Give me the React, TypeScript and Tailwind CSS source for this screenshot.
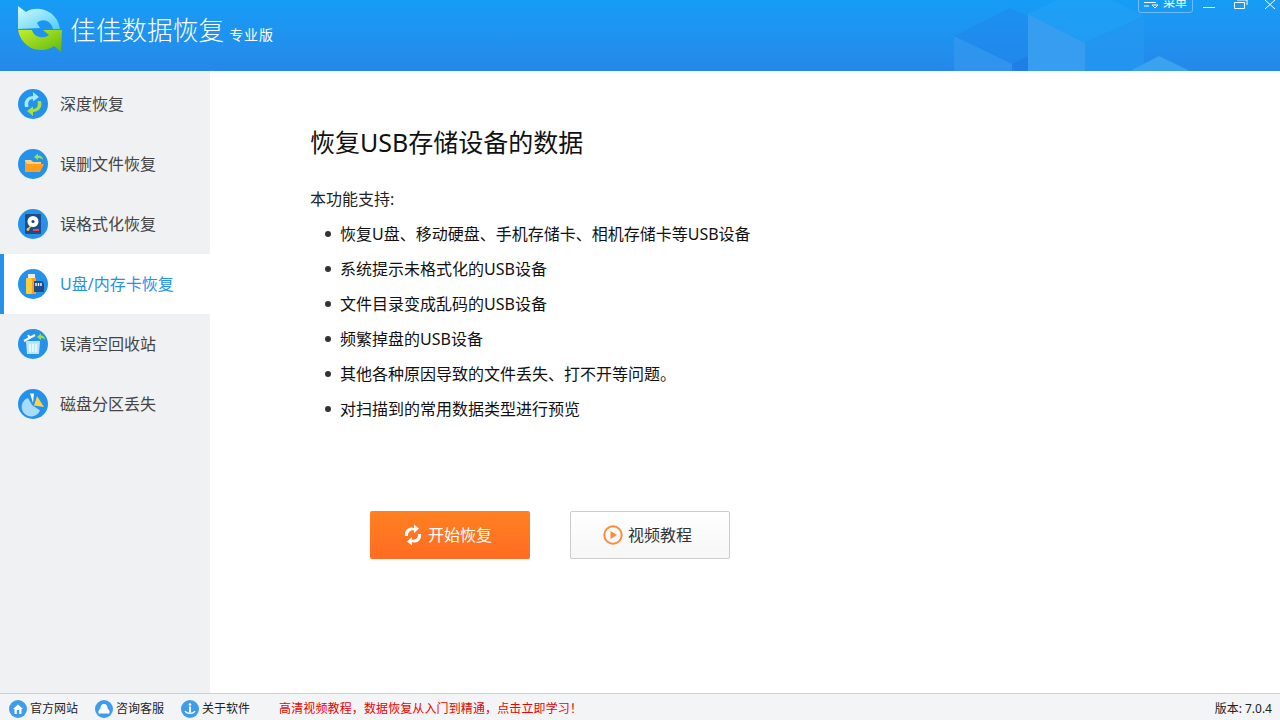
import React from 'react';

const FONT = "font-['Noto_Sans','Noto_Sans_CJK_SC',sans-serif]";

function Logo() {
  return (
    <svg width="48" height="50" viewBox="0 0 48 50" className="shrink-0">
      <defs>
        <linearGradient id="lgTop" x1="0" y1="0" x2="1" y2="1">
          <stop offset="0" stopColor="#d6fbff" />
          <stop offset="1" stopColor="#4fcdf5" />
        </linearGradient>
        <linearGradient id="lgBot" x1="0" y1="0" x2="1" y2="1">
          <stop offset="0" stopColor="#c3ee2c" />
          <stop offset="1" stopColor="#5fb80e" />
        </linearGradient>
      </defs>
      <path d="M2 1 L10 7 C20 0 41 4 44 24 L37 24 C35 15 26 13 21 18 L24 23 L2 24 Z" fill="url(#lgTop)" />
      <path d="M2 25 L16 25 C18 33 28 34 33 30 L27 25 L46 25 L45 47 L38 41 C28 49 6 46 2 25 Z" fill="url(#lgBot)" />
    </svg>
  );
}

function Circle({ children }: { children: React.ReactNode }) {
  return (
    <svg width="30" height="30" viewBox="0 0 30 30" className="shrink-0">
      <circle cx="15" cy="15" r="15" fill="#2492ea" />
      {children}
    </svg>
  );
}

function DeepIcon() {
  return (
    <Circle>
      <path d="M7 18 C5 11 10 7 15 7 L15 3 L21 8 L15 12.5 L15 10 C11 10 9.5 13 10.5 18 Z" fill="#a5e9ff" />
      <path d="M23 12 C25 19 20 23 15 23 L15 27 L9 22 L15 17.5 L15 20 C19 20 20.5 17 19.5 12 Z" fill="#a6e23a" />
    </Circle>
  );
}

function FileIcon() {
  return (
    <Circle>
      <path d="M16 8 L20 4.5 L20 6.5 C23 6.5 25 8 25 11 C24 9.5 22 9 20 9 L20 11 Z" fill="#9fe04a" />
      <path d="M7 11 L13 11 L15 13 L23 13 L23 15 L7 15 Z" fill="#ffd27a" />
      <path d="M9 15 L26 15 L22 23 L7 23 L7 12 Z" fill="#ff9d1e" />
    </Circle>
  );
}

function FormatIcon() {
  return (
    <Circle>
      <rect x="7" y="5" width="16" height="20" rx="1" fill="#1f4b87" />
      <circle cx="15" cy="12.5" r="5.5" fill="#fff" />
      <circle cx="15" cy="12.5" r="1.6" fill="#1f4b87" />
      <path d="M10 20 L13 17" stroke="#f5c842" strokeWidth="1.6" />
      <circle cx="10" cy="20.5" r="1.4" fill="#f5c842" />
      <rect x="15" y="20" width="6" height="2" fill="#ee4b4b" />
    </Circle>
  );
}

function UsbIcon() {
  return (
    <Circle>
      <rect x="10" y="5" width="7" height="4" fill="#e9edf2" />
      <rect x="8" y="9" width="6" height="16" rx="1" fill="#ffce3c" />
      <rect x="14" y="9" width="4" height="16" fill="#ff9d1e" />
      <path d="M16 12 L24 12 L26 14 L26 23 L16 23 Z" fill="#1f4b87" />
      <path d="M18 14 V17 M20.5 14 V17 M23 14 V17" stroke="#fff" strokeWidth="1.4" />
    </Circle>
  );
}

function TrashIcon() {
  return (
    <Circle>
      <path d="M6 12 L17 6" stroke="#fff" strokeWidth="2" />
      <path d="M10 6 L12 9" stroke="#fff" strokeWidth="2" />
      <path d="M8 12 H22 L21 25 H9 Z" fill="#b9e6fb" />
      <path d="M12 15 V23 M15 15 V23 M18 15 V23" stroke="#fff" strokeWidth="1.3" />
      <path d="M19 8 L23 4.5 L23 6.5 C25 6.5 27 8 27 11 C26 9.5 25 9 23 9 L23 11 Z" fill="#9fe04a" />
    </Circle>
  );
}

function PieIcon() {
  return (
    <Circle>
      <path d="M10 9 A9.5 9.5 0 1 0 22 21.5 L14 16 Z" fill="#a9dcfb" />
      <path d="M12 4.5 L16 4.5 L15 14 Z" fill="#fff" />
      <path d="M19 7 L26 18 L16 16.5 Z" fill="#ffd24a" />
    </Circle>
  );
}

const NAV = [
  { label: '深度恢复', icon: <DeepIcon /> },
  { label: '误删文件恢复', icon: <FileIcon /> },
  { label: '误格式化恢复', icon: <FormatIcon /> },
  { label: 'U盘/内存卡恢复', icon: <UsbIcon />, active: true },
  { label: '误清空回收站', icon: <TrashIcon /> },
  { label: '磁盘分区丢失', icon: <PieIcon /> },
];

const FEATURES = [
  '恢复U盘、移动硬盘、手机存储卡、相机存储卡等USB设备',
  '系统提示未格式化的USB设备',
  '文件目录变成乱码的USB设备',
  '频繁掉盘的USB设备',
  '其他各种原因导致的文件丢失、打不开等问题。',
  '对扫描到的常用数据类型进行预览',
];

function HeaderDecor() {
  return (
    <svg width="340" height="71" viewBox="0 0 340 71" className="absolute right-0 top-0">
      <path d="M14 36 L70 8 L88 16 L88 56 L72 64 Z" fill="#1f86ea" opacity="0.45" />
      <path d="M14 36 L72 64 L72 71 L14 71 Z" fill="#3a9aee" opacity="0.55" />
      <path d="M72 64 L88 56 L88 71 L72 71 Z" fill="#1f7fe6" />
      <path d="M88 14 L145 -14 L204 16 L145 43 Z" fill="#22a4f6" opacity="0.6" />
      <path d="M88 14 L145 43 L145 71 L88 71 Z" fill="#379df0" />
      <path d="M145 43 L204 17 L204 71 L145 71 Z" fill="#2398f2" opacity="0.7" />
      <path d="M190 71 L219 56 L250 71 Z" fill="#3ba2f0" />
    </svg>
  );
}

function MenuGlyph() {
  return (
    <svg width="15" height="12" viewBox="0 0 15 12">
      <path d="M0 1.5 H12 M0 5.5 H12 M0 9 H5" stroke="#fff" strokeWidth="1" />
      <path d="M8 8 H14 L11 11 Z" fill="none" stroke="#fff" strokeWidth="1" />
    </svg>
  );
}

function Header() {
  return (
    <header className="relative flex h-[71px] shrink-0 items-start overflow-hidden bg-gradient-to-b from-[#159df6] to-[#2588e9]">
      <HeaderDecor />
      <div className="relative ml-4 mt-[5px] flex items-start">
        <Logo />
        <span className="ml-1.5 mt-[8px] text-[25.7px] leading-[36px] font-light text-white">佳佳数据恢复</span>
        <span className="ml-[5px] mt-[21px] text-sm leading-[18px] tracking-[1px] text-white">专业版</span>
      </div>
      <div className="absolute right-0 top-0 flex items-start">
        <div className="mt-[-7px] flex h-[20px] w-[55px] items-center justify-center gap-1 rounded-[3px] border border-[#6dbcf5] text-xs text-white">
          <MenuGlyph />
          <span>菜单</span>
        </div>
        <svg width="87" height="13" viewBox="0 0 87 13">
          <path d="M10 7.5 H22" stroke="#fff" strokeWidth="1" />
          <path d="M41.5 2.5 H51.5 V8.5 H41.5 Z M44 0 H54 V5" fill="none" stroke="#fff" strokeWidth="1" />
          <path d="M72 0 L82 9 M82 0 L72 9" stroke="#fff" strokeWidth="1" />
        </svg>
      </div>
    </header>
  );
}

function Sidebar() {
  return (
    <aside className="flex w-[210px] shrink-0 flex-col bg-[#f0f1f3] pt-[3px]">
      {NAV.map((item) => (
        <div
          key={item.label}
          className={
            item.active
              ? 'flex h-[60px] items-center border-l-4 border-[#2492ea] bg-white pl-[14px] text-[#2492ea]'
              : 'flex h-[60px] items-center pl-[18px] text-[#444444]'
          }
        >
          {item.icon}
          <span className="ml-3 text-base">{item.label}</span>
        </div>
      ))}
    </aside>
  );
}

function Main() {
  return (
    <main className="flex-1 bg-white pl-[100px] pt-[53px]">
      <h1 className="text-[25px] leading-[36px] text-[#111111]">恢复USB存储设备的数据</h1>
      <p className="mt-[27px] text-base leading-[24px] text-[#222222]">本功能支持:</p>
      <ul className="mt-[5px] flex flex-col">
        {FEATURES.map((f) => (
          <li key={f} className="flex h-[35px] items-center pl-[15px] text-base text-[#111111]">
            <span className="mr-[9px] h-[6px] w-[6px] rounded-full bg-[#333333]" />
            {f}
          </li>
        ))}
      </ul>
      <div className="ml-[60px] mt-[85px] flex gap-10">
        <button className="flex h-12 w-40 items-center justify-center gap-[5px] rounded-[2px] bg-gradient-to-b from-[#ff8120] to-[#ff6b22] pr-[5px] text-base text-white">
          <svg width="20" height="24" viewBox="0 0 20 24">
            <path d="M2 13 C1 7 6 3 11 5 L11 1.5 L16 5.5 L11 10 L11 7.5 C8 6.5 4.5 9 5 13 Z" fill="#fff" />
            <path d="M18 11 C19 17 14 21 9 19 L9 22.5 L4 18.5 L9 14 L9 16.5 C12 17.5 15.5 15 15 11 Z" fill="#fff" />
          </svg>
          开始恢复
        </button>
        <button className="flex h-12 w-40 items-center justify-center gap-[5px] rounded-[2px] border border-[#cccccc] bg-gradient-to-b from-white to-[#f6f6f6] pr-[5px] text-base text-[#333333]">
          <svg width="20" height="20" viewBox="0 0 20 20">
            <circle cx="10" cy="10" r="8.7" fill="none" stroke="#ff8a3a" strokeWidth="2" />
            <path d="M7.5 6 L14 10 L7.5 14 Z" fill="#ff8a3a" />
          </svg>
          视频教程
        </button>
      </div>
    </main>
  );
}

function FootLink({ label, children }: { label: string; children: React.ReactNode }) {
  return (
    <div className="flex items-center gap-[3px]">
      <svg width="18" height="18" viewBox="0 0 18 18">
        <circle cx="9" cy="9" r="9" fill="#3d9cec" />
        {children}
      </svg>
      <span className="text-xs text-[#222222]">{label}</span>
    </div>
  );
}

function Footer() {
  return (
    <footer className="flex h-[27px] shrink-0 items-center border-t border-[#cfd0d2] bg-[#f3f4f6] pl-[9px] pr-2 pt-[4px]">
      <div className="flex gap-[17px]">
        <FootLink label="官方网站">
          <path d="M4 9 L9 4.5 L14 9 L12.5 9 L12.5 14 L5.5 14 L5.5 9 Z" fill="#fff" />
          <rect x="7.8" y="10" width="2.4" height="4" fill="#3d9cec" />
        </FootLink>
        <FootLink label="咨询客服">
          <path d="M9 4 C11.5 4 12.5 6 12.5 8 L14.5 11 L14.5 13.5 L3.5 13.5 L3.5 11 L5.5 8 C5.5 6 6.5 4 9 4 Z" fill="#fff" />
        </FootLink>
        <FootLink label="关于软件">
          <circle cx="9" cy="4.5" r="1.3" fill="#fff" />
          <rect x="8" y="6.5" width="2" height="6" fill="#fff" />
          <path d="M3.5 11 C4 15 14 15 14.5 11 L13 11 C12 13 6 13 5 11 Z" fill="#fff" />
        </FootLink>
      </div>
      <span className="ml-[29px] text-xs tracking-[0.12px] text-[#ee0000]">高清视频教程，数据恢复从入门到精通，点击立即学习！</span>
      <span className="ml-auto text-xs text-[#222222]">版本: 7.0.4</span>
    </footer>
  );
}

export default function App() {
  return (
    <div className={`flex h-[720px] w-[1280px] flex-col overflow-hidden bg-white ${FONT}`}>
      <Header />
      <div className="flex min-h-0 flex-1">
        <Sidebar />
        <Main />
      </div>
      <Footer />
    </div>
  );
}
